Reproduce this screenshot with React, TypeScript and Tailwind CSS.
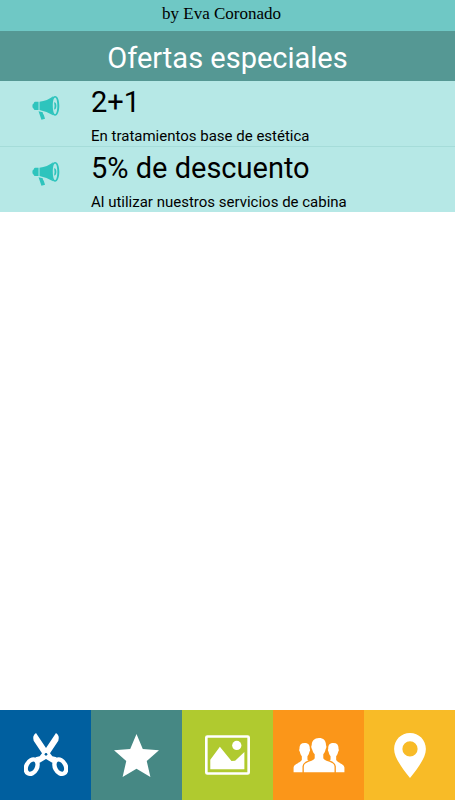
import React, { HTMLAttributes, ReactNode, SVGProps } from 'react';
import { clsx } from 'clsx';

function IconMegaphone(props: SVGProps<SVGSVGElement>) {
    return (
        <svg viewBox="0 0 84 74" fill="currentColor" aria-hidden="true" {...props}>
            <path d="M19 18v25H8q-3 0-4-4-4-1-4-8t4-8q1-5 4-5z" />
            <path d="M22 18q24-3 42-17q-9 29 0 58q-20-12-42-16z" />
            <path fillRule="evenodd" d="M70 0c8 0 13 13 13 30s-5 31-13 31-13-14-13-31 5-30 13-30zm0 5c-4 0-7 11-7 25s3 26 7 26 7-12 7-26-3-25-7-25z" />
            <path d="M67 19c5 0 7 5 7 11s-2 12-7 12q3-11 0-23z" />
            <path d="M19 47l13 3q0 6 3 8l4 12-11 3z" />
        </svg>
    );
}

function IconScissors(props: SVGProps<SVGSVGElement>) {
    return (
        <svg viewBox="0 0 132 132" fill="currentColor" aria-hidden="true" {...props}>
            <path d="M36 0Q24 8 29 23L54 61 47 70 34 73 46 90 66 78 86 90 98 73 85 70 78 61 103 23Q108 8 96 0L66 45z" />
            <g fill="none" stroke="currentColor" strokeWidth="13">
                <ellipse cx="23" cy="101" rx="16" ry="23" transform="rotate(28 23 101)" />
                <ellipse cx="109" cy="101" rx="16" ry="23" transform="rotate(-28 109 101)" />
            </g>
            <circle cx="66" cy="64" r="4" fill="#005f9f" />
        </svg>
    );
}

function IconStar(props: SVGProps<SVGSVGElement>) {
    return (
        <svg viewBox="0 0 136 130" fill="currentColor" aria-hidden="true" {...props}>
            <path d="M68 0L87 45 136 49 99 82 110 130 68 105 26 130 37 82 0 49 49 45z" />
        </svg>
    );
}

function IconGallery(props: SVGProps<SVGSVGElement>) {
    return (
        <svg viewBox="0 0 136 120" fill="currentColor" aria-hidden="true" {...props}>
            <rect x="4" y="4" width="128" height="112" rx="3" fill="none" stroke="currentColor" strokeWidth="8" />
            <circle cx="96" cy="31" r="14" />
            <path d="M16 103V74L45 35 80 78 91 77 119 51V103z" />
        </svg>
    );
}

function IconPeople(props: SVGProps<SVGSVGElement>) {
    return (
        <svg viewBox="0 0 156 106" fill="currentColor" aria-hidden="true" {...props}>
            <path d="M34 15c12 0 17 7 16 18 2 3 1 7-1 9-1 6-3 10-6 13v10c3 6 14 7 20 12v27H1V89C3 78 20 76 26 67V55c-3-3-5-7-6-13-2-2-3-6-1-9-1-11 4-18 15-18z" />
            <path d="M122 15c-12 0-17 7-16 18-2 3-1 7 1 9 1 6 3 10 6 13v10c-3 6-14 7-20 12v27h62V89c-2-11-19-13-25-22V55c3-3 5-7 6-13 2-2 3-6 1-9 1-11-4-18-15-18z" />
            {/* front figure, outlined in the tile colour to cut it from the other two */}
            <path stroke="#fb9619" strokeWidth="8" paintOrder="stroke" d="M78 0c14 0 22 9 21 22 2 2 2 8-1 12-1 7-4 12-7 15v12c5 11 33 9 34 25v18H32V86c1-16 28-14 33-25V49c-4-3-6-8-8-15-3-4-3-10-1-12C56 9 64 0 78 0z" />
        </svg>
    );
}

function IconPin(props: SVGProps<SVGSVGElement>) {
    return (
        <svg viewBox="0 0 96 136" fill="currentColor" aria-hidden="true" {...props}>
            <path fillRule="evenodd" d="M48 0c27 0 48 21 48 48 0 24-20 53-48 88C20 101 0 72 0 48 0 21 21 0 48 0zm0 25a23 23 0 1 0 0 46 23 23 0 0 0 0-46z" />
        </svg>
    );
}

type OfferType = { name: string; description: string; };

const offers: OfferType[] = [
    { name: '2+1', description: 'En tratamientos base de estética' },
    { name: '5% de descuento', description: 'Al utilizar nuestros servicios de cabina' },
];

function OfferRow({ name, description }: OfferType) {
    return (
        <li className="grid grid-cols-[1fr_4fr] border-b border-[#a5dcd9] last:border-b-0">
            <div className="pt-[15px] flex justify-center">
                <IconMegaphone className="w-7 h-6 text-[#2ec4bd]" />
            </div>
            <div>
                <h2 className="pt-1 text-[29px] leading-[34px]">{name}</h2>
                <p className="pt-2 text-[15px] leading-[19px]">{description}</p>
            </div>
        </li>
    );
}

function NavButton({ label, className, children, ...rest }: { label: string; children: ReactNode; } & HTMLAttributes<HTMLButtonElement>) {
    return (
        <button aria-label={label} className={clsx("h-[90px] flex-1 flex items-center justify-center text-white cursor-pointer", className)} {...rest}>
            {children}
        </button>
    );
}

export default function App() {
    return (
        <div className="min-h-screen flex flex-col bg-white text-black font-[Roboto,sans-serif]">
            <header className="text-center">
                <p className="h-[31px] pr-3 bg-[#6fc8c5] text-[17px] leading-7 font-['Liberation_Serif',serif]">by Eva Coronado</p>
                <h1 className="pt-1.5 pb-0.5 bg-[#559894] text-[29px] leading-[42px] text-white">Ofertas especiales</h1>
            </header>

            <main className="flex-1">
                <ul className="bg-[#b6e8e6]">
                    {offers.map((offer) => (
                        <OfferRow {...offer} key={offer.name} />
                    ))}
                </ul>
            </main>

            <nav className="flex">
                <NavButton label="Servicios" className="bg-[#005f9f]"><IconScissors className="w-11 h-11" /></NavButton>
                <NavButton label="Ofertas" className="bg-[#468884]"><IconStar className="w-[45px] h-[43px]" /></NavButton>
                <NavButton label="Galería" className="bg-[#b0ca2f]"><IconGallery className="w-[45px] h-10" /></NavButton>
                <NavButton label="Equipo" className="bg-[#fb9619]"><IconPeople className="w-[52px] h-[35px]" /></NavButton>
                <NavButton label="Ubicación" className="bg-[#f8bb27]"><IconPin className="w-8 h-[45px]" /></NavButton>
            </nav>
        </div>
    );
}
